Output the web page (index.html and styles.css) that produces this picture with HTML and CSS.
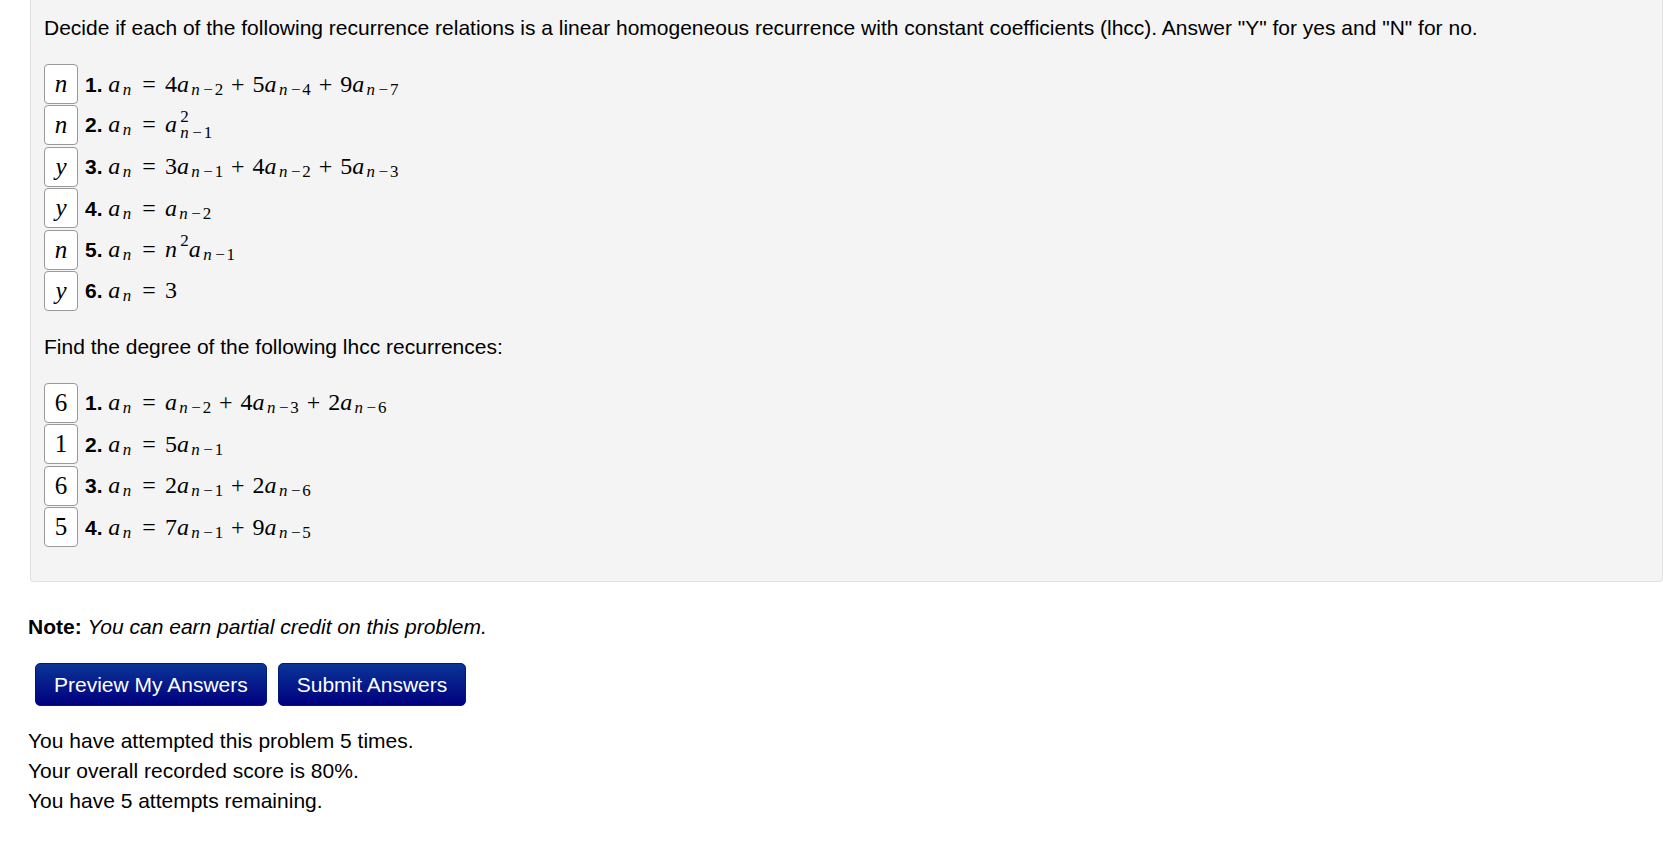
FILE: index.html
```html
<!DOCTYPE html>
<html lang="en">
<head>
<meta charset="utf-8">
<title>Problem</title>
<link rel="stylesheet" href="styles.css">
</head>
<body>
<div class="page">
  <div class="well">
    <p class="para">Decide if each of the following recurrence relations is a linear homogeneous recurrence with constant coefficients (lhcc). Answer "Y" for yes and "N" for no.</p>
    <div class="items">
      <div class="item"><span class="ans"><i>n</i></span><span class="eq"><b class="lbl">1.</b> <span class="m"><i>a</i><sub><i>n</i></sub><span class="rel">=</span>4<i>a</i><sub><i>n</i><span class="mi">−</span>2</sub><span class="bin">+</span>5<i>a</i><sub><i>n</i><span class="mi">−</span>4</sub><span class="bin">+</span>9<i>a</i><sub><i>n</i><span class="mi">−</span>7</sub></span></span></div>
      <div class="item"><span class="ans"><i>n</i></span><span class="eq"><b class="lbl">2.</b> <span class="m"><i>a</i><sub><i>n</i></sub><span class="rel">=</span><i>a</i><span class="ss"><span class="ss-up">2</span><span class="ss-dn"><i>n</i><span class="mi">−</span>1</span></span></span></span></div>
      <div class="item"><span class="ans"><i>y</i></span><span class="eq"><b class="lbl">3.</b> <span class="m"><i>a</i><sub><i>n</i></sub><span class="rel">=</span>3<i>a</i><sub><i>n</i><span class="mi">−</span>1</sub><span class="bin">+</span>4<i>a</i><sub><i>n</i><span class="mi">−</span>2</sub><span class="bin">+</span>5<i>a</i><sub><i>n</i><span class="mi">−</span>3</sub></span></span></div>
      <div class="item"><span class="ans"><i>y</i></span><span class="eq"><b class="lbl">4.</b> <span class="m"><i>a</i><sub><i>n</i></sub><span class="rel">=</span><i>a</i><sub><i>n</i><span class="mi">−</span>2</sub></span></span></div>
      <div class="item"><span class="ans"><i>n</i></span><span class="eq"><b class="lbl">5.</b> <span class="m"><i>a</i><sub><i>n</i></sub><span class="rel">=</span><i>n</i><sup>2</sup><i>a</i><sub><i>n</i><span class="mi">−</span>1</sub></span></span></div>
      <div class="item"><span class="ans"><i>y</i></span><span class="eq"><b class="lbl">6.</b> <span class="m"><i>a</i><sub><i>n</i></sub><span class="rel">=</span>3</span></span></div>
    </div>
    <p class="para">Find the degree of the following lhcc recurrences:</p>
    <div class="items">
      <div class="item"><span class="ans">6</span><span class="eq"><b class="lbl">1.</b> <span class="m"><i>a</i><sub><i>n</i></sub><span class="rel">=</span><i>a</i><sub><i>n</i><span class="mi">−</span>2</sub><span class="bin">+</span>4<i>a</i><sub><i>n</i><span class="mi">−</span>3</sub><span class="bin">+</span>2<i>a</i><sub><i>n</i><span class="mi">−</span>6</sub></span></span></div>
      <div class="item"><span class="ans">1</span><span class="eq"><b class="lbl">2.</b> <span class="m"><i>a</i><sub><i>n</i></sub><span class="rel">=</span>5<i>a</i><sub><i>n</i><span class="mi">−</span>1</sub></span></span></div>
      <div class="item"><span class="ans">6</span><span class="eq"><b class="lbl">3.</b> <span class="m"><i>a</i><sub><i>n</i></sub><span class="rel">=</span>2<i>a</i><sub><i>n</i><span class="mi">−</span>1</sub><span class="bin">+</span>2<i>a</i><sub><i>n</i><span class="mi">−</span>6</sub></span></span></div>
      <div class="item"><span class="ans">5</span><span class="eq"><b class="lbl">4.</b> <span class="m"><i>a</i><sub><i>n</i></sub><span class="rel">=</span>7<i>a</i><sub><i>n</i><span class="mi">−</span>1</sub><span class="bin">+</span>9<i>a</i><sub><i>n</i><span class="mi">−</span>5</sub></span></span></div>
    </div>
  </div>
  <p class="note"><b>Note:</b> <i>You can earn partial credit on this problem.</i></p>
  <div class="buttons">
    <button class="btn" type="button">Preview My Answers</button>
    <button class="btn" type="button">Submit Answers</button>
  </div>
  <div class="attempts">
    You have attempted this problem 5 times.<br>
    Your overall recorded score is 80%.<br>
    You have 5 attempts remaining.
  </div>
</div>
</body>
</html>
```

FILE: styles.css
```css
html, body {
  margin: 0;
  padding: 0;
  background: #ffffff;
}

body {
  font-family: "Liberation Sans", Arial, sans-serif;
  font-size: 21px;
  color: #000000;
}

.page {
  padding-left: 28px;
}

.well {
  margin-left: 2px;
  padding: 13px 13px 13px 13px;
  background: #f4f4f4;
  border: 1px solid #e0e0e0;
  border-top: none;
  border-radius: 0 0 4px 4px;
}

.para {
  margin: 0;
  line-height: 30px;
}

.items {
  display: flex;
  flex-direction: column;
  gap: 1.4px;
  margin: 21px 0;
}

.item {
  display: flex;
  align-items: center;
  height: 40px;
}

.ans {
  box-sizing: border-box;
  width: 34px;
  height: 40px;
  display: flex;
  align-items: center;
  justify-content: center;
  background: #ffffff;
  border: 1px solid #9a9a9a;
  border-radius: 4px;
  font-family: "Liberation Serif", "DejaVu Serif", serif;
  font-size: 25px;
  color: #000;
}

.eq {
  margin-left: 7px;
  white-space: nowrap;
  line-height: 23px;
}

.lbl {
  font-weight: bold;
}

.m {
  font-family: "Liberation Serif", "DejaVu Serif", serif;
  font-size: 24px;
}

.m i {
  letter-spacing: 0.1em;
}

.m sub {
  font-size: 0.707em;
  vertical-align: -3px;
  line-height: 0;
}

.m sup {
  font-size: 0.707em;
  vertical-align: 11px;
  line-height: 0;
  margin-left: 1px;
}

.mi {
  display: inline-block;
  width: 0.778em;
  text-align: center;
}

.rel,
.bin {
  display: inline-block;
  width: 0.778em;
  text-align: center;
}

.rel {
  margin: 0 0.2778em;
}

.bin {
  margin: 0 0.2222em;
}

.ss {
  display: inline-flex;
  flex-direction: column;
  font-size: 0.707em;
  line-height: 16px;
  vertical-align: 10px;
  margin-left: 1px;
}

.note {
  margin: 30px 0 0 0;
  line-height: 30px;
}

.buttons {
  display: flex;
  gap: 11px;
  margin: 21px 0 0 7px;
}

.btn {
  box-sizing: border-box;
  height: 43px;
  padding: 0 18px;
  border: 1px solid #001a78;
  border-radius: 5px;
  background: linear-gradient(to bottom, #0b3596, #00007f);
  color: #ffffff;
  font-family: "Liberation Sans", Arial, sans-serif;
  font-size: 21px;
  cursor: pointer;
}

.attempts {
  margin-top: 20px;
  line-height: 30px;
}
```
